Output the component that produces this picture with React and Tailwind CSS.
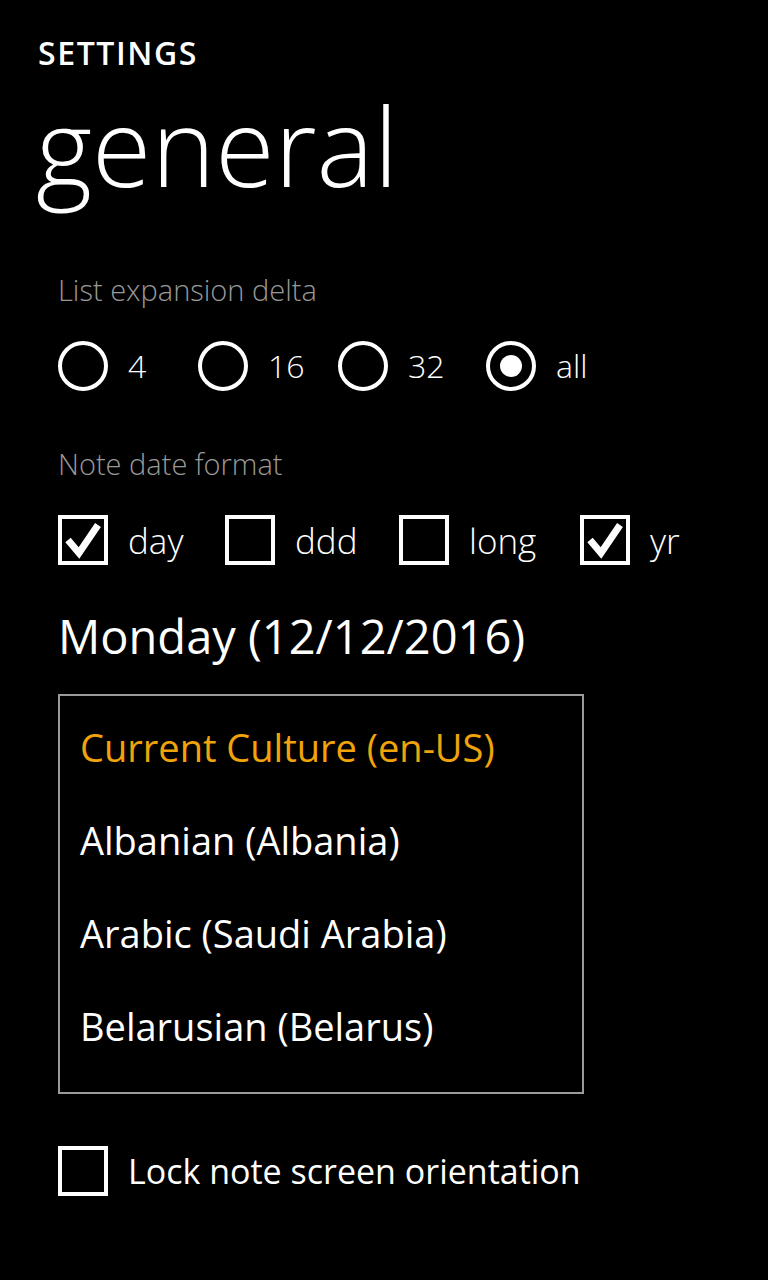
import React, { useState } from "react";

const font = { fontFamily: '"Open Sans", "Noto Sans", sans-serif' };

function Radio({ label, checked, onClick, width }) {
  return (
    <button onClick={onClick} className={`flex items-center ${width}`}>
      <span className="flex h-[50px] w-[50px] items-center justify-center rounded-full border-[4px] border-white">
        {checked && <span className="h-[22px] w-[22px] rounded-full bg-white" />}
      </span>
      <span className="ml-[20px] text-[32px] font-light leading-none text-white">{label}</span>
    </button>
  );
}

function Check({ label, checked, onClick, width, textClass = "text-[35px] font-light" }) {
  return (
    <button onClick={onClick} className={`flex items-center ${width}`}>
      <span className="flex h-[50px] w-[50px] shrink-0 items-center justify-center border-[4px] border-white">
        {checked && (
          <svg width="40" height="40" viewBox="0 0 40 40">
            <path d="M5 20 L16 33 L35 5" fill="none" stroke="white" strokeWidth="7" strokeLinejoin="miter" />
          </svg>
        )}
      </span>
      <span className={`ml-[20px] leading-none text-white ${textClass}`}>{label}</span>
    </button>
  );
}

export default function App() {
  const [delta, setDelta] = useState("all");
  const [fmt, setFmt] = useState({ day: true, ddd: false, long: false, yr: true });
  const [culture, setCulture] = useState(0);
  const [lock, setLock] = useState(false);

  const cultures = [
    "Current Culture (en-US)",
    "Albanian (Albania)",
    "Arabic (Saudi Arabia)",
    "Belarusian (Belarus)",
  ];

  return (
    <div style={font} className="min-h-[1280px] w-[768px] bg-black text-white">
      {/* Header */}
      <div className="pl-[38px] pt-[30px]">
        <div className="text-[32px] font-semibold leading-[46px] tracking-[1.6px]">SETTINGS</div>
        <div className="ml-[-2px] text-[108px] font-light leading-[140px]">general</div>
      </div>

      <div className="pl-[58px]">
        {/* List expansion delta */}
        <div className="mt-[57px] text-[29px] font-light leading-[34px] text-[#999999]">List expansion delta</div>
        <div className="mt-[34px] flex">
          {[
            ["4", "w-[140px]"],
            ["16", "w-[140px]"],
            ["32", "w-[148px]"],
            ["all", ""],
          ].map(([v, w]) => (
            <Radio key={v} label={v} width={w} checked={delta === v} onClick={() => setDelta(v)} />
          ))}
        </div>

        {/* Note date format */}
        <div className="mt-[56px] text-[29px] font-light leading-[34px] text-[#999999]">Note date format</div>
        <div className="mt-[34px] flex">
          {[
            ["day", "w-[167px]"],
            ["ddd", "w-[174px]"],
            ["long", "w-[181px]"],
            ["yr", ""],
          ].map(([v, w]) => (
            <Check
              key={v}
              label={v}
              width={w}
              checked={fmt[v]}
              onClick={() => setFmt({ ...fmt, [v]: !fmt[v] })}
            />
          ))}
        </div>

        {/* Date preview */}
        <div className="mt-[41px] text-[47px] leading-[60px]">Monday (12/12/2016)</div>

        {/* Culture list */}
        <div className="mt-[28px] h-[400px] w-[526px] border-2 border-[#9a9a9a] pl-[20px] pt-[4px]">
          {cultures.map((c, i) => (
            <button
              key={c}
              onClick={() => setCulture(i)}
              className={`block h-[93px] text-left text-[38px] leading-[50px] ${
                culture === i ? "text-[#f0a30a]" : "text-white"
              }`}
            >
              {c}
            </button>
          ))}
        </div>

        {/* Lock orientation */}
        <div className="mt-[52px]">
          <Check
            label="Lock note screen orientation"
            checked={lock}
            onClick={() => setLock(!lock)}
            textClass="text-[34px]"
          />
        </div>
      </div>
    </div>
  );
}
